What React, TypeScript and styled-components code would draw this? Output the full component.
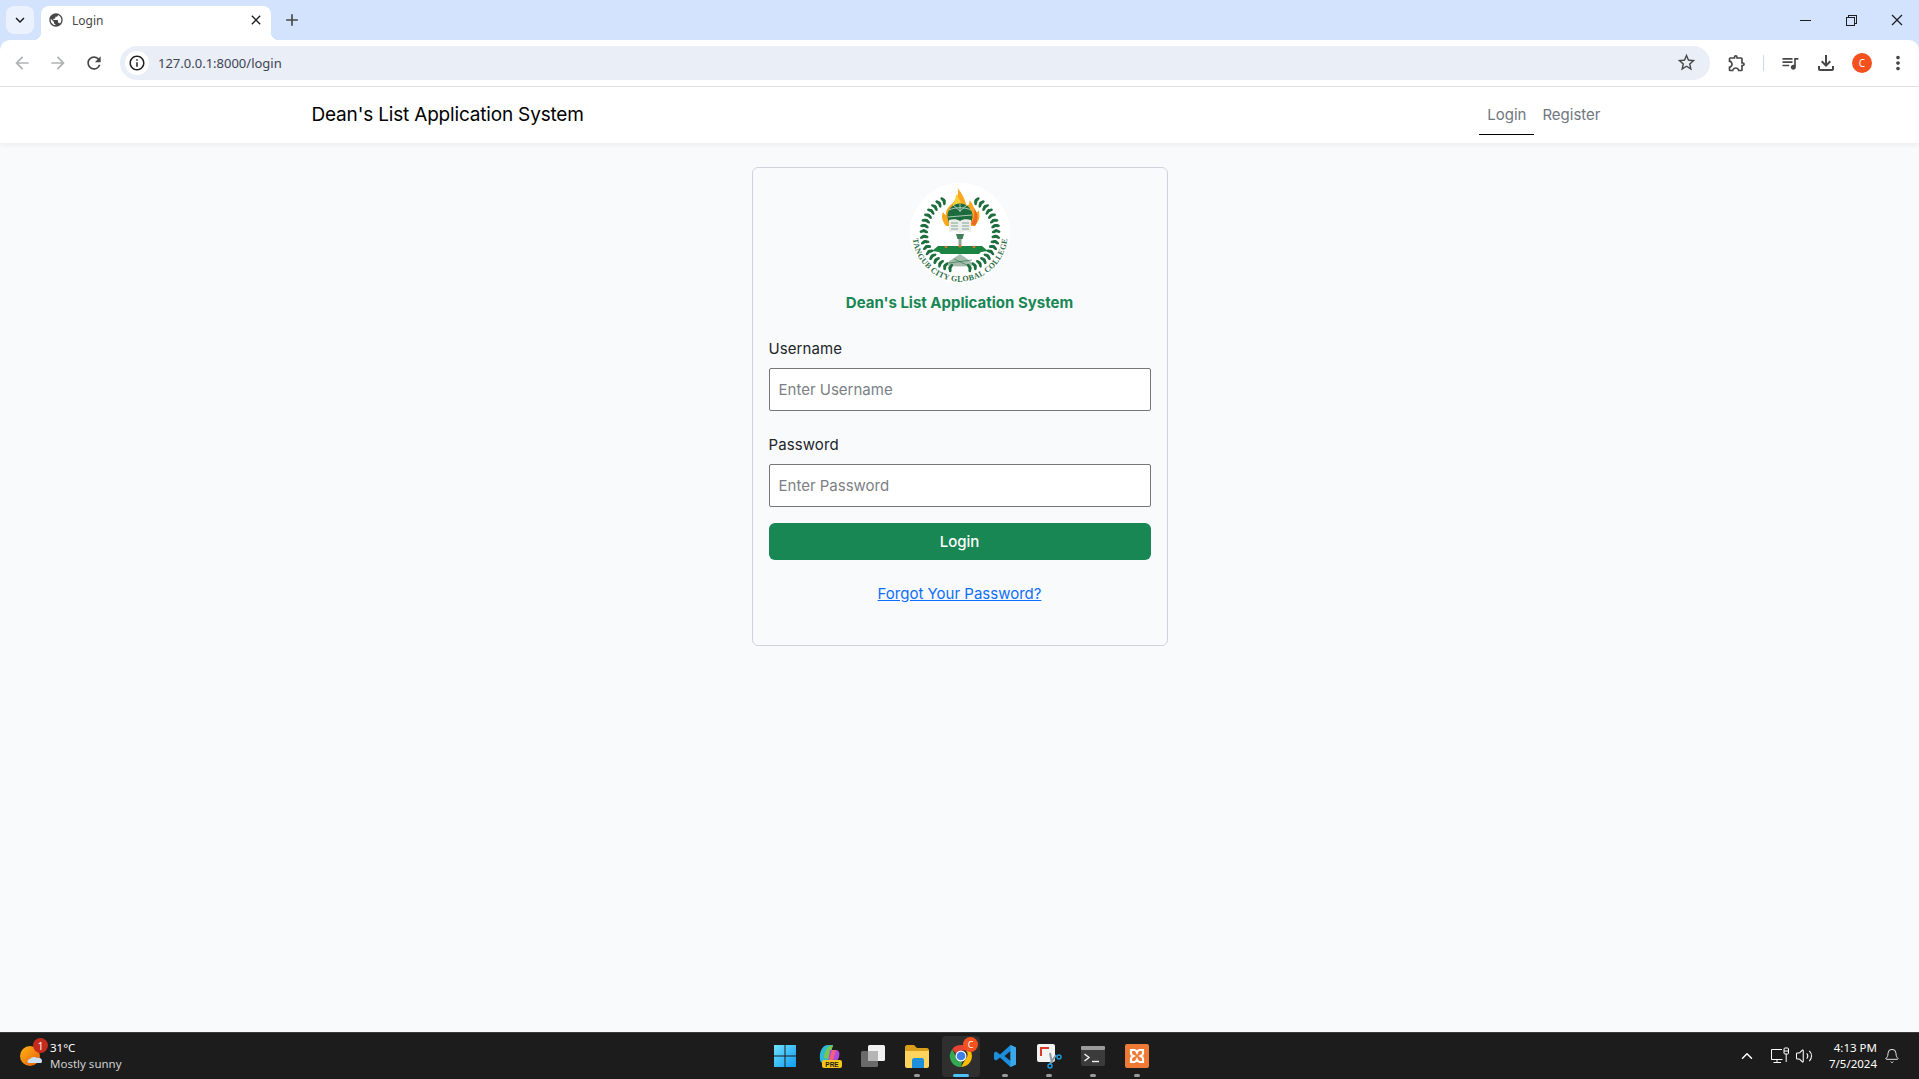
import React, { FC } from 'react';
import styled, { createGlobalStyle } from 'styled-components';
import {
  MdAdd,
  MdArrowBack,
  MdArrowForward,
  MdClose,
  MdInfoOutline,
  MdKeyboardArrowDown,
  MdMoreVert,
  MdOutlineExtension,
  MdOutlineFileDownload,
  MdPublic,
  MdQueueMusic,
  MdRefresh,
  MdStarBorder,
} from 'react-icons/md';
import { VscChromeClose, VscChromeMinimize, VscChromeRestore } from 'react-icons/vsc';
import { Bell, ChevronUp, Volume2 } from 'lucide-react';

const UI_FONT = `'Noto Sans', 'Open Sans', sans-serif`;
const PAGE_FONT = `Inter, 'Liberation Sans', sans-serif`;

const GlobalStyle = createGlobalStyle`
  html, body {
    margin: 0;
    padding: 0;
    height: 100%;
    overflow: hidden;
  }
  * {
    box-sizing: border-box;
  }
`;

// laurel leaves, two rows per branch running from the top round to the bottom
const leaves = (side: 1 | -1) =>
  Array.from({ length: 34 }, (_, i) => {
    const step = Math.floor(i / 2);
    const deg = 27 + step * 8.6;
    const rad = (deg * Math.PI) / 180;
    const r = i % 2 === 0 ? 34.8 : 37.4;
    const x = 50 + side * r * Math.sin(rad);
    const y = 50 - r * Math.cos(rad);
    const tilt = i % 2 === 0 ? 70 : 110;
    return { x, y, rot: side * (deg + tilt), key: `${side}-${i}` };
  });

const Logo: FC = () => (
  <LogoSvg viewBox="0 0 100 100">
    <circle cx="50" cy="50" r="50" fill="#fff" />
    <path
      d="M47.500 5c5 6 7 11 9 17 3 1 3-2 3-5 4 5 5 9 6 13 2-1 3-2 3-3 2 6 1 11-4 16H36c-4-5-5-10-3-14 1 1 2 3 3 3-1-7 6-10 9-15 3-4 4-8 2.500-12z"
      fill="#f8a81e"
    />
    <path d="M46 11c3 4 5 8 6 13l-9 3c-2-5 3-10 3-16z" fill="#fdd13b" />
    <path d="M64 25c4 5 5 12 1 18l-4-2c3-5 4-10 3-16z" fill="#ee6a22" />
    <circle cx="50" cy="33" r="12.500" fill="#1c6b3c" />
    <path
      d="M39 27c6-3 16-3 22 0M43 22l7 6 7-6M50 21v8M38 34l24-2"
      stroke="#cfe0d4"
      strokeWidth="0.8"
      fill="none"
    />
    <path d="M39 37c4-1 8-1 11 1 3-2 7-2 11-1v12c-4-1-8-1-11 1-3-2-7-2-11-1z" fill="#e9eeea" />
    <path
      d="M41 40h7M41 43h7M41 46h7M52 40h7M52 43h7M52 46h7"
      stroke="#7f9a88"
      strokeWidth="0.9"
    />
    <path d="M46 51h8l-1.500 5h-5z" fill="#3f7f58" />
    <path d="M48.500 56h3v6h-3z" fill="#8ba796" />
    <path d="M22 68l6-5h44l6 5-7 1-2 2H31l-2-2z" fill="#1a8443" />
    <circle cx="36" cy="64" r="1.300" fill="#e8702a" />
    <circle cx="50" cy="63" r="1.500" fill="#e8702a" />
    <circle cx="64" cy="64" r="1.300" fill="#e8702a" />
    <path d="M35 82c5-5 9-7 15-11 6 4 10 7 15 11-10 2-20 2-30 0z" fill="#a6bdae" />
    <path d="M39 80l23-3M44 76l15 7" stroke="#1c6b3c" strokeWidth="0.6" />
    {[...leaves(1), ...leaves(-1)].map(leaf => (
      <ellipse
        key={leaf.key}
        cx={leaf.x}
        cy={leaf.y}
        rx="3.200"
        ry="1.500"
        fill="#1f6e3e"
        transform={`rotate(${leaf.rot} ${leaf.x} ${leaf.y})`}
      />
    ))}
    <path id="logo-arc" d="M2.500 51a47.500 47.500 0 0 0 95 0" fill="none" />
    <LogoText>
      <textPath href="#logo-arc" startOffset="50%" textAnchor="middle">
        TANGUB CITY GLOBAL COLLEGE
      </textPath>
    </LogoText>
  </LogoSvg>
);

const WindowsIcon: FC = () => (
  <svg width="24" height="24" viewBox="0 0 24 24">
    <defs>
      <linearGradient id="win" x1="0" y1="0" x2="1" y2="1">
        <stop offset="0" stopColor="#6fe0ff" />
        <stop offset="1" stopColor="#0f9bf0" />
      </linearGradient>
    </defs>
    <path d="M1 1h10.500v10.500H1zM12.500 1H23v10.500H12.500zM1 12.500h10.500V23H1zM12.500 12.500H23V23H12.500z" fill="url(#win)" />
  </svg>
);

const CopilotIcon: FC = () => (
  <svg width="26" height="26" viewBox="0 0 26 26">
    <path d="M4 16C3 8 7 2 12 2h5l-5 18H7c-2 0-3-2-3-4z" fill="#2fb9d8" />
    <path d="M8 15c0-5 2-9 5-12l4-1-4 14z" fill="#7ac74f" />
    <path d="M14 7h6c3 0 4 3 3 7-1 3-3 5-6 5h-5z" fill="#b04bd6" />
    <path d="M16 7h4l-3 10h-4z" fill="#f2617f" />
    <rect x="6" y="17" width="20" height="8" rx="2" fill="#f5c518" />
    <CopilotLabel x="16" y="23.500" textAnchor="middle">
      PRE
    </CopilotLabel>
  </svg>
);

const TaskViewIcon: FC = () => (
  <svg width="26" height="24" viewBox="0 0 26 24">
    <rect x="8" y="1" width="17" height="16" rx="1.500" fill="#f2f2f2" />
    <rect x="1" y="7" width="17" height="16" rx="1.500" fill="#6a6a6a" />
    <rect x="8" y="7" width="10" height="10" fill="#b5b5b5" />
  </svg>
);

const FilesIcon: FC = () => (
  <svg width="26" height="24" viewBox="0 0 26 24">
    <path d="M1 3c0-1 1-2 2-2h7l3 3h10c1 0 2 1 2 2v3H1z" fill="#d99f1a" />
    <path d="M1 7h24v15c0 1-1 2-2 2H3c-1 0-2-1-2-2z" fill="#ffd45e" />
    <path d="M8 16c0-1 1-2 2-2h8c1 0 2 1 2 2v8H8z" fill="#1d8fdc" />
  </svg>
);

const ChromeIcon: FC = () => (
  <svg width="24" height="24" viewBox="0 0 24 24">
    <path d="M12 1a11 11 0 0 1 9.500 5.500H12a5.500 5.500 0 0 0-5 3L3.200 5.200A11 11 0 0 1 12 1z" fill="#ea4335" />
    <path d="M21.500 6.500A11 11 0 0 1 12 23l4.800-8.300a5.500 5.500 0 0 0 0-8.200z" fill="#fbbc04" />
    <path d="M12 23A11 11 0 0 1 3.200 5.200L7.800 14a5.500 5.500 0 0 0 5.500 3.300z" fill="#34a853" />
    <circle cx="12" cy="12" r="5.500" fill="#fff" />
    <circle cx="12" cy="12" r="4.300" fill="#3f7ee8" />
  </svg>
);

const VsCodeIcon: FC = () => (
  <svg width="24" height="24" viewBox="0 0 24 24">
    <path d="M17.500 1L23 3.500v17L17.500 23 7 13.500l-3.800 3L1 15.300v-6.600L3.200 7.500l3.800 3zM17.500 7l-6 5 6 5z" fill="#1b8fdc" />
    <path d="M17.500 1L23 3.500v17L17.500 23z" fill="#3aa8ec" />
  </svg>
);

const SnipIcon: FC = () => (
  <svg width="26" height="26" viewBox="0 0 26 26">
    <rect x="1" y="1" width="18" height="18" rx="2" fill="#f3f3f3" />
    <path d="M4 4h9v2H6v7H4z" fill="#d8392b" strokeDasharray="2 1" />
    <path d="M14 10l2 10M20 12l-6 9" stroke="#8b9aa6" strokeWidth="2" />
    <circle cx="23" cy="14" r="2" fill="none" stroke="#1a9be0" strokeWidth="1.500" />
    <circle cx="14" cy="23" r="2" fill="none" stroke="#1a9be0" strokeWidth="1.500" />
  </svg>
);

const TerminalIcon: FC = () => (
  <svg width="24" height="20" viewBox="0 0 24 20">
    <rect width="24" height="20" rx="2" fill="#3b3b3b" />
    <rect width="24" height="4" rx="1" fill="#9a9a9a" />
    <path d="M3.500 8l4.500 3.500L3.500 15" stroke="#f2f2f2" strokeWidth="1.400" fill="none" />
    <path d="M11 15.500h7" stroke="#f2f2f2" strokeWidth="1.400" />
  </svg>
);

const XamppIcon: FC = () => (
  <svg width="24" height="24" viewBox="0 0 24 24">
    <rect width="24" height="24" rx="2" fill="#ee7a36" />
    <path
      d="M6 6h3.500c1.500 0 2 1.500 2.500 2.500C12.500 7.500 13 6 14.500 6H18v3.500c0 1.500-1.500 2-2.500 2.500 1 .5 2.500 1 2.500 2.500V18h-3.500c-1.500 0-2-1.500-2.500-2.500-.5 1-1 2.500-2.500 2.500H6v-3.500C6 13 7.500 12.500 8.500 12 7.500 11.500 6 11 6 9.500z"
      fill="none"
      stroke="#fff"
      strokeWidth="2.200"
    />
  </svg>
);

const WeatherIcon: FC = () => (
  <svg width="24" height="24" viewBox="0 0 24 24">
    <defs>
      <linearGradient id="sun" x1="0" y1="0" x2="1" y2="1">
        <stop offset="0" stopColor="#fdb813" />
        <stop offset="1" stopColor="#e8590c" />
      </linearGradient>
    </defs>
    <circle cx="10" cy="12" r="10" fill="url(#sun)" />
    <path d="M9 19c-2 0-2-4 1-4 1-2 5-3 7-1 3-1 5 1 5 3s-1 2-2 2z" fill="#c9e0f5" />
  </svg>
);

const MonitorIcon: FC = () => (
  <svg width="20" height="18" viewBox="0 0 20 18" fill="none" stroke="#fff" strokeWidth="1">
    <path d="M12 2.500H1.500v10h11M7 12.500v3M3.500 15.500H11" />
    <rect x="14" y="1" width="4.500" height="6" rx="1" />
    <path d="M14 4h4.500M16.200 7v8" />
  </svg>
);

const App: FC = () => (
  <Screen>
    <GlobalStyle />

    <BrowserChrome>
      <TabStrip>
        <TabSearch>
          <MdKeyboardArrowDown size={18} />
        </TabSearch>
        <Tab>
          <MdPublic size={16} color="#474747" />
          <TabTitle>Login</TabTitle>
          <MdClose size={16} color="#1f1f1f" />
        </Tab>
        <NewTab>
          <MdAdd size={20} />
        </NewTab>
        <WindowButtons>
          <VscChromeMinimize size={16} />
          <VscChromeRestore size={16} />
          <VscChromeClose size={16} />
        </WindowButtons>
      </TabStrip>

      <Toolbar>
        <ToolIcon $muted>
          <MdArrowBack size={20} />
        </ToolIcon>
        <ToolIcon $muted>
          <MdArrowForward size={20} />
        </ToolIcon>
        <ToolIcon>
          <MdRefresh size={20} />
        </ToolIcon>
        <Omnibox>
          <InfoChip>
            <MdInfoOutline size={18} />
          </InfoChip>
          <Url>127.0.0.1:8000/login</Url>
          <MdStarBorder size={21} color="#474747" />
        </Omnibox>
        <Extensions>
          <ToolIcon>
            <MdOutlineExtension size={20} />
          </ToolIcon>
          <ToolDivider />
          <ToolIcon>
            <MdQueueMusic size={20} />
          </ToolIcon>
          <ToolIcon>
            <MdOutlineFileDownload size={24} />
          </ToolIcon>
          <ToolIcon>
            <Avatar>C</Avatar>
          </ToolIcon>
          <ToolIcon>
            <MdMoreVert size={22} />
          </ToolIcon>
        </Extensions>
      </Toolbar>
    </BrowserChrome>

    <Navbar>
      <NavContainer>
        <Brand>Dean's List Application System</Brand>
        <NavLinks>
          <NavLink $active>Login</NavLink>
          <NavLink>Register</NavLink>
        </NavLinks>
      </NavContainer>
    </Navbar>

    <Main>
      <Card>
        <Logo />
        <CardTitle>Dean's List Application System</CardTitle>
        <Label htmlFor="username">Username</Label>
        <Input id="username" placeholder="Enter Username" />
        <Label htmlFor="password">Password</Label>
        <Input id="password" placeholder="Enter Password" />
        <LoginButton>Login</LoginButton>
        <ForgotLink href="#forgot">Forgot Your Password?</ForgotLink>
      </Card>
    </Main>

    <Taskbar>
      <Weather>
        <WeatherGlyph>
          <WeatherIcon />
          <WeatherBadge>1</WeatherBadge>
        </WeatherGlyph>
        <WeatherText>
          <span>31°C</span>
          <WeatherDim>Mostly sunny</WeatherDim>
        </WeatherText>
      </Weather>

      <TaskIcons>
        <TaskButton><WindowsIcon /></TaskButton>
        <TaskButton><CopilotIcon /></TaskButton>
        <TaskButton><TaskViewIcon /></TaskButton>
        <TaskButton $open><FilesIcon /></TaskButton>
        <TaskButton $active>
          <ChromeIcon />
          <ChromeBadge>C</ChromeBadge>
        </TaskButton>
        <TaskButton $open><VsCodeIcon /></TaskButton>
        <TaskButton $open><SnipIcon /></TaskButton>
        <TaskButton $open><TerminalIcon /></TaskButton>
        <TaskButton $open><XamppIcon /></TaskButton>
      </TaskIcons>

      <Tray>
        <ChevronUp size={18} />
        <TrayIcons>
          <MonitorIcon />
          <Volume2 size={18} strokeWidth={1.4} />
        </TrayIcons>
        <Clock>
          <span>4:13 PM</span>
          <span>7/5/2024</span>
        </Clock>
        <Bell size={16} strokeWidth={1.3} />
      </Tray>
    </Taskbar>
  </Screen>
);

export default App;

const Screen = styled.div`
  display: flex;
  flex-direction: column;
  width: 100%;
  height: 100vh;
  background: #f9fafc;
`;

const BrowserChrome = styled.header`
  flex: none;
  background: #d3e3fd;
`;

const TabStrip = styled.div`
  display: flex;
  align-items: flex-start;
  height: 40px;
  padding: 6px 0 0 6px;
`;

const TabSearch = styled.div`
  display: flex;
  align-items: center;
  justify-content: center;
  width: 28px;
  height: 28px;
  border-radius: 8px;
  background: #ebf1fd;
  color: #1f1f1f;
`;

const Tab = styled.div`
  position: relative;
  display: flex;
  align-items: center;
  gap: 6px;
  width: 230px;
  height: 34px;
  margin-left: 7px;
  padding: 0 7px 6px 7px;
  border-radius: 8px 8px 0 0;
  background: #fff;

  &::before,
  &::after {
    content: '';
    position: absolute;
    bottom: 0;
    width: 8px;
    height: 8px;
  }

  &::before {
    left: -8px;
    background: radial-gradient(circle at 0 0, #d3e3fd 8px, #fff 8.5px);
  }

  &::after {
    right: -8px;
    background: radial-gradient(circle at 100% 0, #d3e3fd 8px, #fff 8.5px);
  }
`;

const TabTitle = styled.span`
  flex: 1;
  font: 12px ${UI_FONT};
  color: #474747;
  margin-left: 2px;
`;

const NewTab = styled.div`
  display: flex;
  align-items: center;
  justify-content: center;
  width: 28px;
  height: 28px;
  margin-left: 7px;
  color: #474747;
`;

const WindowButtons = styled.div`
  display: flex;
  align-items: center;
  gap: 30px;
  height: 28px;
  margin-left: auto;
  padding-right: 14px;
  color: #1f1f1f;
`;

const Toolbar = styled.div`
  display: flex;
  align-items: center;
  height: 47px;
  padding: 0 0 1px 4px;
  border-bottom: 1px solid #e1e3e6;
  border-radius: 10px 10px 0 0;
  background: #fff;
`;

const ToolIcon = styled.div<{ $muted?: boolean }>`
  display: flex;
  flex: none;
  align-items: center;
  justify-content: center;
  width: 36px;
  color: ${({ $muted }) => ($muted ? '#b1b2b4' : '#474747')};
`;

const Omnibox = styled.div`
  display: flex;
  flex: none;
  align-items: center;
  width: 1590px;
  height: 34px;
  margin-left: 8px;
  padding: 0 13px 0 5px;
  border-radius: 17px;
  background: #e9eef7;
`;

const InfoChip = styled.div`
  display: flex;
  align-items: center;
  justify-content: center;
  width: 24px;
  height: 24px;
  border-radius: 50%;
  background: #fff;
  color: #1f1f1f;
`;

const Url = styled.span`
  flex: 1;
  margin-left: 9px;
  font: 13px ${UI_FONT};
  color: #3e4450;
`;

const Extensions = styled.div`
  display: flex;
  align-items: center;
  flex: 1;
  padding-left: 9px;
`;

const ToolDivider = styled.div`
  flex: none;
  width: 1px;
  height: 16px;
  margin: 0 8px;
  background: #c7d8f5;
`;

const Avatar = styled.div`
  display: flex;
  align-items: center;
  justify-content: center;
  width: 20px;
  height: 20px;
  border-radius: 50%;
  background: #f4511e;
  color: #fff;
  font: 10px ${UI_FONT};
`;

const Navbar = styled.nav`
  flex: 0 0 56px;
  background: #fff;
  box-shadow: 0 2px 5px rgba(0, 0, 0, 0.06);
  z-index: 1;
`;

const NavContainer = styled.div`
  display: flex;
  align-items: center;
  justify-content: space-between;
  width: 1320px;
  height: 100%;
  margin: 0 auto;
  padding: 0 11px 0 12px;
`;

const Brand = styled.div`
  font: 400 19px/30px ${PAGE_FONT};
  letter-spacing: -0.18px;
  color: #000;
`;

const NavLinks = styled.div`
  display: flex;
  align-self: stretch;
  align-items: flex-start;
  padding-top: 7px;
`;

const NavLink = styled.a<{ $active?: boolean }>`
  padding: 9px 8px 0;
  height: 41px;
  font: 400 15px/24px ${PAGE_FONT};
  color: #6f7680;
  border-bottom: 1px solid ${({ $active }) => ($active ? '#000' : 'transparent')};
`;

const Main = styled.main`
  display: flex;
  justify-content: center;
  align-items: flex-start;
  flex: 1;
  min-height: 0;
  padding-top: 24px;
`;

const Card = styled.div`
  display: flex;
  flex-direction: column;
  width: 416px;
  height: 479px;
  padding: 15px 16px 0;
  border: 1px solid #ced4da;
  border-radius: 6px;
  background: #f9fafc;
`;

const LogoSvg = styled.svg`
  flex: none;
  align-self: center;
  width: 100px;
  height: 100px;
`;

const LogoText = styled.text`
  font: 700 8px 'Liberation Serif', serif;
  letter-spacing: 0.25px;
  fill: #2f6e47;
`;

const CardTitle = styled.h1`
  margin: 8px 0 0;
  font: 700 15px/24px ${PAGE_FONT};
  color: #198754;
  text-align: center;
`;

const Label = styled.label`
  margin-top: 22px;
  font: 400 15px/24px ${PAGE_FONT};
  letter-spacing: 0.1px;
  color: #212529;
`;

const Input = styled.input`
  flex: none;
  width: 100%;
  height: 43px;
  margin-top: 7px;
  padding: 0 9px;
  border: 1px solid #767676;
  border-radius: 2px;
  background: #fff;
  font: 400 15px ${PAGE_FONT};
  outline: none;

  &::placeholder {
    color: #7b7f85;
    opacity: 1;
  }
`;

const LoginButton = styled.button`
  flex: none;
  width: 100%;
  height: 37px;
  margin-top: 16px;
  border: none;
  border-radius: 6px;
  background: #198754;
  color: #fff;
  font: 500 15px ${PAGE_FONT};
`;

const ForgotLink = styled.a`
  margin-top: 22px;
  font: 400 15px/24px ${PAGE_FONT};
  color: #0d6efd;
  text-align: center;
  text-decoration: underline;
`;

const Taskbar = styled.footer`
  display: grid;
  grid-template-columns: 1fr auto 1fr;
  align-items: center;
  flex: 0 0 47px;
  border-top: 1px solid #3a3a3a;
  background: #1c1c1c;
  color: #fff;
  font: 11.5px ${UI_FONT};
`;

const Weather = styled.div`
  display: flex;
  align-items: center;
  gap: 6px;
  padding-left: 20px;
`;

const WeatherGlyph = styled.div`
  position: relative;
  display: flex;
  width: 24px;
  height: 24px;
`;

const WeatherBadge = styled.span`
  position: absolute;
  top: -6px;
  right: -4px;
  display: flex;
  align-items: center;
  justify-content: center;
  width: 15px;
  height: 15px;
  border-radius: 50%;
  background: #c42b1c;
  font-size: 10px;
`;

const WeatherText = styled.div`
  display: flex;
  flex-direction: column;
  line-height: 16px;
`;

const WeatherDim = styled.span`
  color: #d0d0d0;
`;

const TaskIcons = styled.div`
  display: flex;
  height: 100%;
  margin-left: 3px;
`;

const TaskButton = styled.div<{ $active?: boolean; $open?: boolean }>`
  position: relative;
  display: flex;
  align-items: center;
  justify-content: center;
  width: 44px;
  height: 100%;

  ${({ $active }) =>
    $active &&
    `
    &::before {
      content: '';
      position: absolute;
      inset: 3px 3px 2px 3px;
      border-radius: 4px;
      background: #2f2f2f;
    }
    > * {
      position: relative;
    }
  `}

  &::after {
    content: '';
    position: absolute;
    left: 50%;
    bottom: 2px;
    display: ${({ $active, $open }) => ($active || $open ? 'block' : 'none')};
    width: ${({ $active }) => ($active ? '16px' : '6px')};
    height: 3px;
    border-radius: 2px;
    transform: translateX(-50%);
    background: ${({ $active }) => ($active ? '#4cc2ff' : '#9a9a9a')};
  }
`;

const ChromeBadge = styled.span`
  position: absolute !important;
  top: 4px;
  right: 5px;
  display: flex;
  align-items: center;
  justify-content: center;
  width: 15px;
  height: 15px;
  border-radius: 50%;
  background: #f4511e;
  font-size: 9px;
`;

const CopilotLabel = styled.text`
  font: 700 6.5px 'Liberation Sans', sans-serif;
  fill: #1c1c1c;
`;

const Tray = styled.div`
  display: flex;
  align-items: center;
  justify-content: flex-end;
  padding-right: 19px;
`;

const TrayIcons = styled.div`
  display: flex;
  align-items: center;
  gap: 5px;
  margin: 0 16px 0 14px;
`;

const Clock = styled.div`
  display: flex;
  flex-direction: column;
  align-items: flex-end;
  line-height: 16px;
  margin-right: 7px;
`;
